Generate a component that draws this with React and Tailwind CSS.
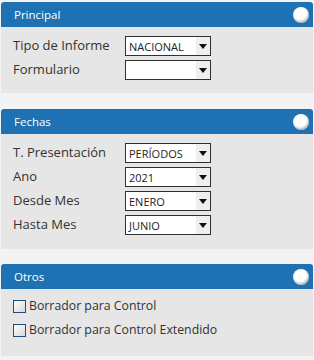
import React from 'react';

const Select = ({ value }) => (
  <div className="w-[86px] h-[20px] border border-[#2f2f2f] bg-white flex items-stretch">
    <div className="flex-1 flex items-center pl-[3px] text-[11px] text-[#222] leading-none">{value}</div>
    <div className="w-[14px] bg-[#efefef] flex items-center justify-center">
      <svg width="8" height="5" viewBox="0 0 8 5"><path d="M0 0H8L4 5Z" fill="#111" /></svg>
    </div>
  </div>
);

const Field = ({ label, value }) => (
  <div className="flex items-center h-[20px]">
    <div className="w-[112px] text-[13px] text-[#333]">{label}</div>
    <Select value={value} />
  </div>
);

const Check = ({ label }) => (
  <div className="flex items-center h-[20px]">
    <div className="w-[13px] h-[13px] border border-[#234b7e] bg-gradient-to-br from-white to-[#d8d8d8]" />
    <span className="ml-[3px] text-[12.3px] text-[#333]">{label}</span>
  </div>
);

const Panel = ({ title, className, children }) => (
  <div className={className}>
    <div className="h-[25px] bg-[#1e72b4] rounded-t-[3px] flex items-center justify-between pl-[13px] pr-[4px]">
      <span className="text-[11.5px] text-white">{title}</span>
      <div className="w-[16px] h-[16px] rounded-full bg-white shadow-[inset_-1px_-2px_2px_rgba(0,0,0,0.25)]" />
    </div>
    {children}
  </div>
);

export default function App() {
  return (
    <div className="w-[314px] h-[360px] bg-[#f3f3f3] pt-[2px] px-[1px] overflow-hidden" style={{ fontFamily: '"Open Sans", sans-serif' }}>
      <Panel title="Principal">
        <div className="bg-[#e6e6e6] pt-[9px] pb-[13px] pl-[12px] flex flex-col gap-[4px]">
          <Field label="Tipo de Informe" value="NACIONAL" />
          <Field label="Formulario" value="" />
        </div>
      </Panel>

      <Panel title="Fechas" className="mt-[16px]">
        <div className="bg-[#e6e6e6] pt-[9px] pb-[14px] pl-[12px] flex flex-col gap-[4px]">
          <Field label="T. Presentación" value="PERÍODOS" />
          <Field label="Ano" value="2021" />
          <Field label="Desde Mes" value="ENERO" />
          <Field label="Hasta Mes" value="JUNIO" />
        </div>
      </Panel>

      <Panel title="Otros" className="mt-[15px]">
        <div className="bg-[#e6e6e6] pt-[7px] pb-[16px] pl-[12px] flex flex-col gap-[4px]">
          <Check label="Borrador para Control" />
          <Check label="Borrador para Control Extendido" />
        </div>
      </Panel>
    </div>
  );
}
